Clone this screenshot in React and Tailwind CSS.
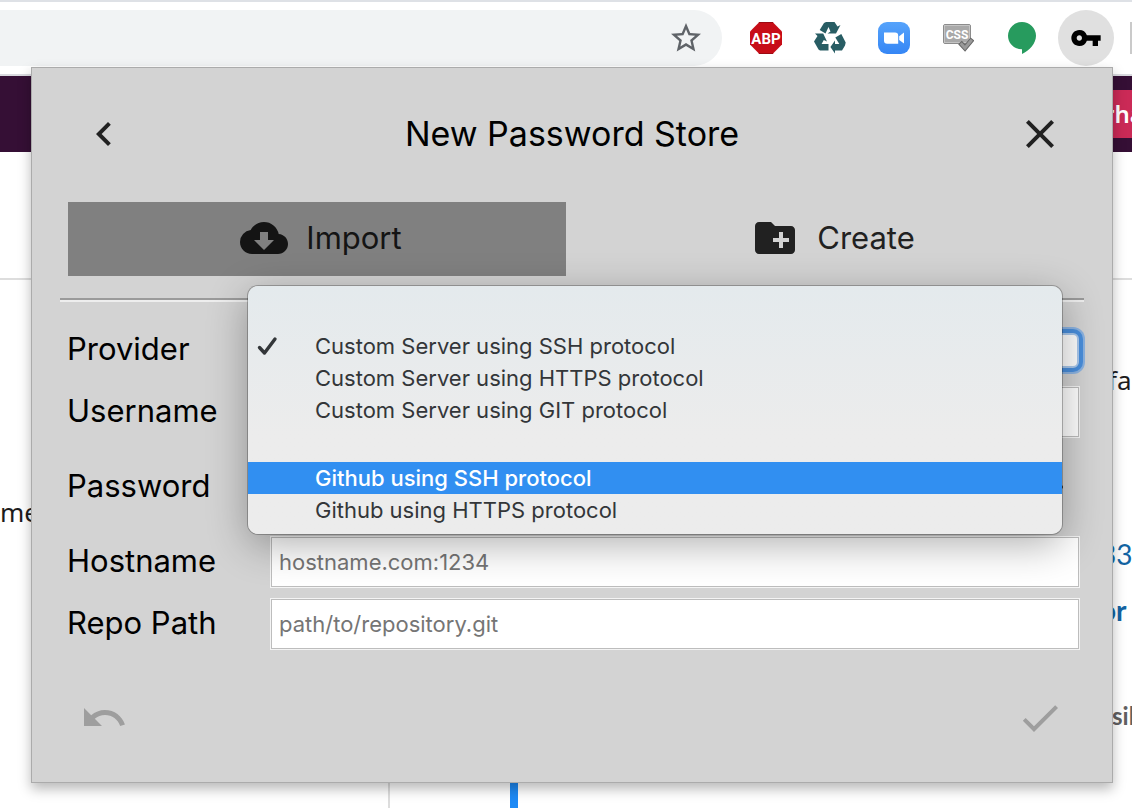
import {
  MdNavigateBefore,
  MdClose,
  MdCloudDownload,
  MdCreateNewFolder,
  MdUndo,
  MdCheck,
  MdVpnKey,
  MdStarBorder,
  MdVisibility,
} from "react-icons/md";

const toolButton = "flex size-8 shrink-0 items-center justify-center";

function AdblockIcon() {
  return (
    <svg viewBox="0 0 32 32" className="size-8" aria-hidden="true">
      <path d="M9.4 0h13.2L32 9.4v13.2L22.6 32H9.4L0 22.6V9.4z" fill="#c70d17" />
      <path d="M9.4 0h13.2l1 1H8.4zM8.4 31h15.2l-1 1H9.4z" fill="#9c0a12" />
      <text x="16" y="21.500" textAnchor="middle" fill="#fff" fontFamily="Roboto, sans-serif" fontWeight="700" fontSize="15">
        ABP
      </text>
    </svg>
  );
}

function RecycleIcon() {
  return (
    <svg viewBox="0 0 32 32" className="size-8" fill="#285d64" aria-hidden="true">
      <path d="M10 1L12 0H20.500L23.500 4.500L26.500 3L22 11.500H13.500L16.500 9.500L14.500 5L11.500 11.500L5.700 8z" />
      <path d="M1 11.500H9.200L13 19.500L9.800 18L7.600 22H14.500V28.500H6L4.500 27.500L0 19.500L3.500 14z" />
      <path d="M21.300 15.500L27.300 12L31.700 20.500L31 23.500L28 28.500H21V31.500L16.400 25L21 18.500V22H25.300z" />
    </svg>
  );
}

function ZoomIcon() {
  return (
    <svg viewBox="0 0 32 32" className="size-8" aria-hidden="true">
      <defs>
        <linearGradient id="zoom-blue" x1="0" y1="0" x2="0" y2="1">
          <stop offset="0" stopColor="#56a3fb" />
          <stop offset="1" stopColor="#3586f5" />
        </linearGradient>
      </defs>
      <rect width="32" height="32" rx="9" fill="url(#zoom-blue)" />
      <path d="M6 10.500h11a3.200 3.200 0 0 1 3.200 3.200v8H9.200A3.200 3.200 0 0 1 6 18.500z" fill="#fff" />
      <path d="M21.200 14.200L26 10.600v11l-4.800-3.600z" fill="#fff" />
    </svg>
  );
}

function CssIcon() {
  return (
    <svg viewBox="0 0 32 32" className="size-8" aria-hidden="true">
      <rect x="1.500" y="2.500" width="27" height="19" rx="1.500" fill="#a9a9a9" stroke="#8c8c8c" />
      <rect x="2.500" y="3.500" width="25" height="17" fill="none" stroke="#c4c4c4" />
      <text x="15" y="17" textAnchor="middle" fill="#fff" fontFamily="Roboto, sans-serif" fontWeight="700" fontSize="12">
        CSS
      </text>
      <path d="M18 20.500l5 5.500 7.500-9" fill="none" stroke="#666" strokeWidth="5" />
      <path d="M18.700 21.200l4.300 4.800 6.800-8.200" fill="none" stroke="#999" strokeWidth="3" />
    </svg>
  );
}

function HangoutsIcon() {
  return (
    <svg viewBox="0 0 32 32" className="size-8" aria-hidden="true">
      <path d="M16 0a14 14 0 0 0-14 13.700C2 21.300 8.200 27.300 16 27.300V32c7.500-3.800 14-10.500 14-18.300A14 14 0 0 0 16 0z" fill="#279b5e" />
    </svg>
  );
}

function Toolbar() {
  return (
    <header className="flex h-[76px] items-start border-t-2 border-b-2 border-t-[#dee1e6] border-b-[#d9dadf] bg-white pt-2">
      <div className="flex h-14 flex-1 items-center justify-end rounded-r-full bg-[#f1f3f4] pr-[18px]">
        <button type="button" aria-label="Bookmark" className="text-[#5f6368]">
          <MdStarBorder className="size-9" />
        </button>
      </div>
      <div className="flex h-14 items-center gap-8 pl-7">
        <button type="button" aria-label="Ad blocker" className={toolButton}><AdblockIcon /></button>
        <button type="button" aria-label="Recycle" className={toolButton}><RecycleIcon /></button>
        <button type="button" aria-label="Video call" className={toolButton}><ZoomIcon /></button>
        <button type="button" aria-label="Styles" className={toolButton}><CssIcon /></button>
        <button type="button" aria-label="Chat" className={toolButton}><HangoutsIcon /></button>
      </div>
      <button type="button" aria-label="Password store" className="ml-5 flex size-14 shrink-0 items-center justify-center rounded-full bg-[#e0e0e0]">
        <MdVpnKey className="size-8 text-black" />
      </button>
      <div className="mt-3 ml-4 h-8 w-0.5 bg-[#cacaca]" />
    </header>
  );
}

function Page() {
  return (
    <div className="flex flex-1 flex-col bg-white">
      <div className="flex h-[76px] items-center justify-end bg-[#350f35]">
        <div className="flex h-12 w-7 items-center bg-[#cb2a57] font-['Noto_Sans',sans-serif] text-2xl font-semibold text-white">
          <span>rha</span>
        </div>
      </div>
      <div className="h-32 border-b-2 border-[#dddddd]" />
      <div className="flex flex-1">
        <div className="flex w-[390px] shrink-0 flex-col border-r-2 border-[#dddddd] pt-[214px]">
          <span className="font-['Noto_Sans',sans-serif] text-[26px] leading-9 text-[#1d1c1d]">me</span>
        </div>
        <div className="ml-[120px] w-2 shrink-0 bg-[#1e8af5]" />
        <div className="ml-auto flex w-8 flex-col font-[Lato,sans-serif] text-[28px] leading-9 whitespace-nowrap">
          <span className="mt-[82px] pl-2 font-['Noto_Sans',sans-serif] text-[26px] text-[#1d1c1d]">fa</span>
          <span className="mt-[138px] text-[#1264a3]">33</span>
          <span className="mt-5 font-bold text-[#1264a3]">or</span>
          <span className="mt-[70px] pl-3 text-2xl leading-9 font-bold text-[#616061]">sil</span>
        </div>
      </div>
    </div>
  );
}

const field =
  "block h-[50px] w-full border border-[#bdbdbd] bg-white px-[7px] text-[22px] text-black outline outline-[#f4f4f4] placeholder:text-[#757575]";

function Row({ id, label, tall, children }) {
  return (
    <div className={tall ? "flex h-[88px] items-center" : "flex h-[62px] items-center"}>
      <label htmlFor={id} className="w-[204px] shrink-0 pb-0.5 text-[31px] leading-10 text-black">{label}</label>
      <div className="flex-1">{children}</div>
    </div>
  );
}

const groups = [
  ["Custom Server using SSH protocol", "Custom Server using HTTPS protocol", "Custom Server using GIT protocol"],
  ["Github using SSH protocol", "Github using HTTPS protocol"],
];
const selected = groups[0][0];
const active = groups[1][0];

function ProviderMenu() {
  return (
    <div
      role="listbox"
      aria-label="Provider"
      className="absolute top-[218px] right-[50px] left-[216px] flex flex-col gap-9 rounded-[10px] bg-linear-to-b from-[#e4eaed] to-[#ececec] to-60% pt-11 pb-2 shadow-[0_0_0_1px_rgba(0,0,0,0.25),0_10px_40px_rgba(0,0,0,0.32)]"
    >
      {groups.map((group) => (
        <div key={group[0]} role="group">
          {group.map((name) => (
            <div
              key={name}
              role="option"
              aria-selected={name === selected}
              className={
                name === active
                  ? "flex h-8 items-center bg-[#318ff1] text-[22px] font-medium text-white"
                  : "flex h-8 items-center text-[22px] text-[#333639]"
              }
            >
              <span className="flex w-[67px] shrink-0 pl-[9px]">
                {name === selected && (
                  <svg viewBox="0 0 22 20" className="h-5 w-[22px]" aria-hidden="true">
                    <path d="M2.500 11.500l5 5.500L18 3" fill="none" stroke="#333639" strokeWidth="3.400" strokeLinecap="round" strokeLinejoin="round" />
                  </svg>
                )}
              </span>
              {name}
            </div>
          ))}
        </div>
      ))}
    </div>
  );
}

function Popup() {
  return (
    <section className="absolute top-[67px] right-[19px] left-8 -ml-px border border-[#ababab] bg-[#d3d3d3] pb-10 font-[Inter,sans-serif] shadow-[0_6px_12px_rgba(0,0,0,0.28)]">
      <div className="flex items-center justify-between px-12 pt-[42px] text-[#212121]">
        <button type="button" aria-label="Back"><MdNavigateBefore className="size-12" /></button>
        <h1 className="text-[34px] leading-10 text-black">New Password Store</h1>
        <button type="button" aria-label="Close"><MdClose className="size-12" /></button>
      </div>
      <div className="mt-11 mr-12 ml-9 grid h-[74px] grid-cols-2 text-[31px] text-[#212121]">
        <button type="button" className="flex items-center justify-center gap-[18px] bg-[#808080] pb-0.5 pl-2 text-[#141414]">
          <MdCloudDownload className="size-12" />
          <span>Import</span>
        </button>
        <button type="button" className="flex items-center justify-center gap-[18px] pb-0.5 pl-9">
          <MdCreateNewFolder className="size-12" />
          <span>Create</span>
        </button>
      </div>
      <hr className="mx-7 mt-[22px] border-t-2 border-b-2 border-t-[#9a9a9a] border-b-[#eeeeee]" />
      <form className="mt-[17px] pr-[33px] pl-[35px]">
        <Row id="provider" label="Provider">
          <select
            id="provider"
            defaultValue={selected}
            className="block h-[35px] w-full appearance-none rounded-md border-2 border-[#a9c8ec] bg-white px-2 text-[22px] leading-7 shadow-[0_0_0_4px_#4a8fdd,0_0_0_6px_#8db4e2] outline-none"
          >
            {groups.flat().map((name) => (
              <option key={name}>{name}</option>
            ))}
          </select>
        </Row>
        <Row id="username" label="Username">
          <input id="username" type="text" className={field} />
        </Row>
        <Row id="password" label="Password" tall>
          <div className="flex items-center gap-1 pr-3.5">
            <input id="password" type="password" className={field} />
            <button type="button" aria-label="Show password"><MdVisibility className="size-12 text-[#212121]" /></button>
          </div>
        </Row>
        <Row id="hostname" label="Hostname">
          <input id="hostname" type="text" placeholder="hostname.com:1234" className={field} />
        </Row>
        <Row id="repo" label="Repo Path">
          <input id="repo" type="text" placeholder="path/to/repository.git" className={field} />
        </Row>
      </form>
      <div className="mt-[39px] flex justify-between px-12 text-[#9e9e9e]">
        <button type="button" aria-label="Undo"><MdUndo className="size-12" /></button>
        <button type="button" aria-label="Confirm"><MdCheck className="size-12" /></button>
      </div>
      <ProviderMenu />
    </section>
  );
}

export default function App() {
  return (
    <main className="relative flex min-h-screen flex-col overflow-hidden bg-white">
      <Toolbar />
      <Page />
      <Popup />
    </main>
  );
}
